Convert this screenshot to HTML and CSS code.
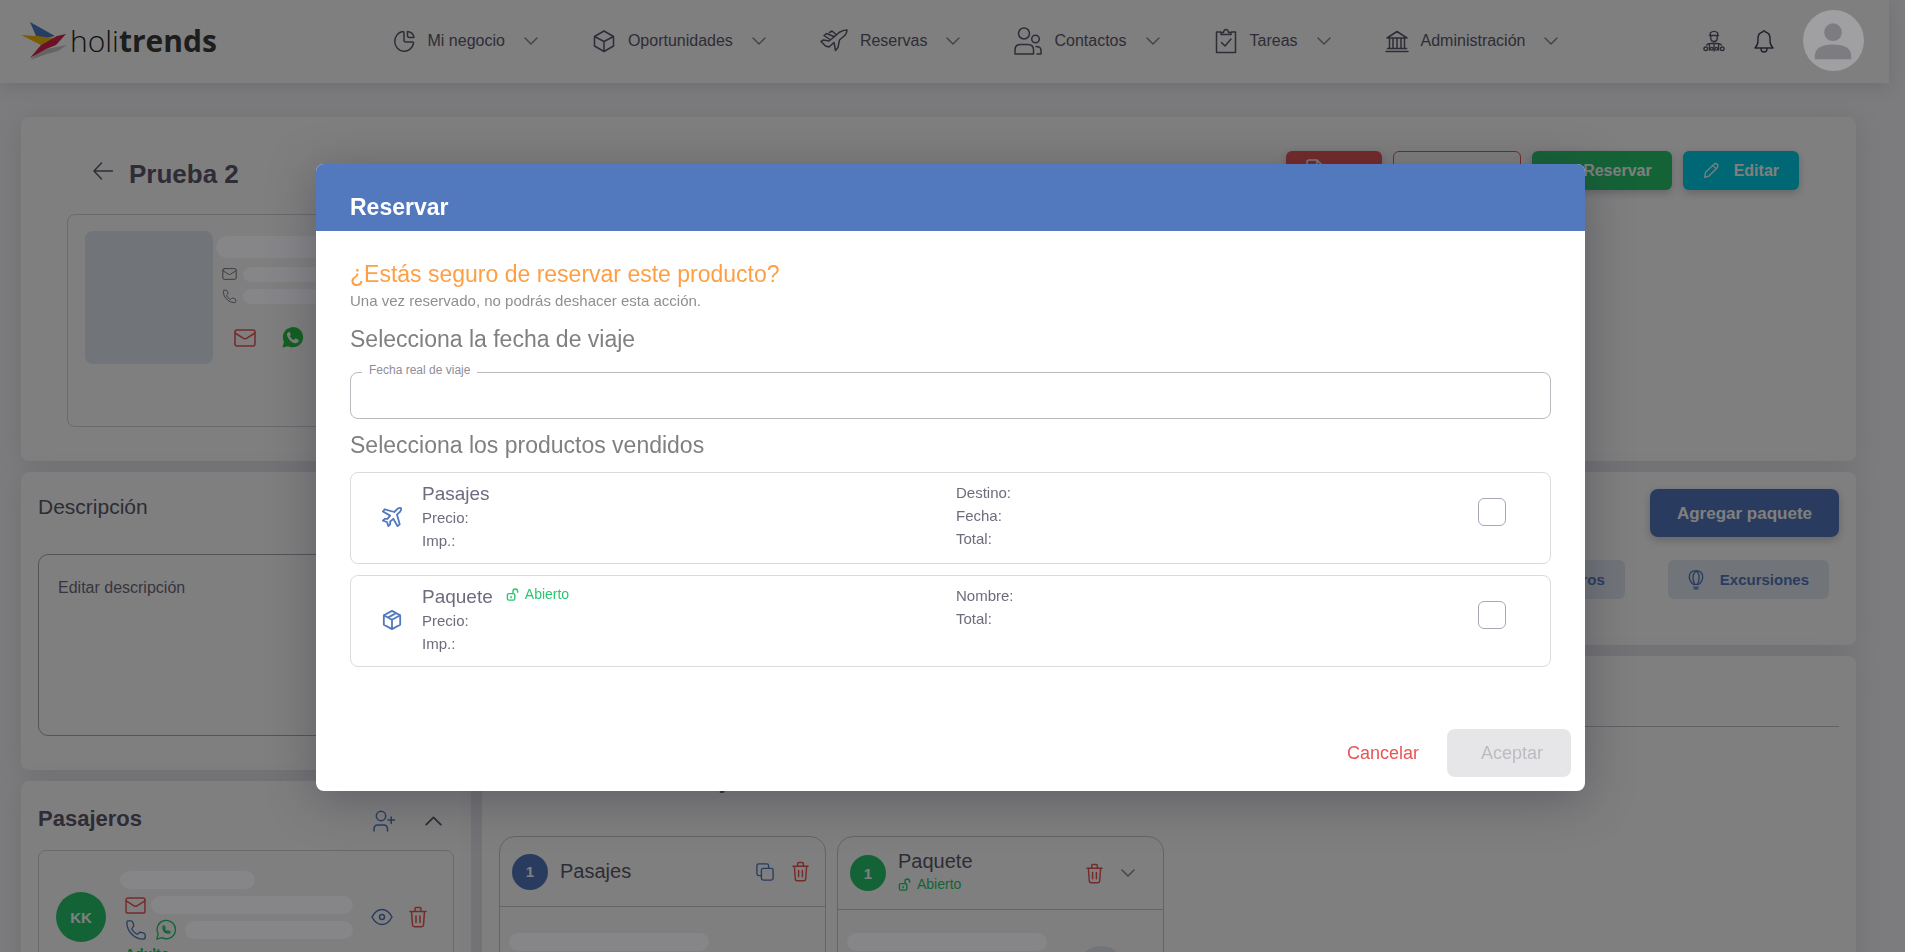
FILE: index.html
```html
<!DOCTYPE html>
<html lang="es">
<head>
<meta charset="utf-8">
<title>Holitrends - Reservar</title>
<link rel="stylesheet" href="styles.css">
</head>
<body>
<svg class="sprite" aria-hidden="true">
  <symbol id="chevron" viewBox="0 0 14 8"><path d="M1 1l6 6 6-6"/></symbol>
  <symbol id="mail" viewBox="0 0 22 18"><rect x="1" y="1" width="20" height="16" rx="2"/><path d="M1 4l8.500 5.300q1.500.9 3 0L21 4"/></symbol>
  <symbol id="phone" viewBox="0 0 24 24"><path d="M3 2h3.500q1.500 0 2 1.500l1 3q.4 1.500-1 2.500-1.500 1-.8 2.500a12 12 0 0 0 4.800 4.800q1.500.7 2.500-.8 1-1.400 2.500-1l3 1q1.500.5 1.500 2V20q0 2-2 2A18.500 18.500 0 0 1 2 4q0-2 1-2"/></symbol>
  <symbol id="whatsapp" viewBox="0 0 24 24"><path d="M2 22l1.500-5.700a10 10 0 1 1 4 4z"/><path d="M8.700 8.500v1.300a6 6 0 0 0 5.500 5.500h1.300a.8.8 0 0 0 0-1.800l-1.300-.6-1.300 1a6 6 0 0 1-2.800-2.800l1-1.300-.6-1.300a.9.9 0 0 0-1.800 0"/></symbol>
  <symbol id="trash" viewBox="0 0 18 22"><path d="M1 5.500h16M6 5V2.500Q6 1.500 7 1.500h4q1 0 1 1V5M2.500 5.500l1 13.500q.2 1.800 2 1.800h7q1.800 0 2-1.800l1-13.500M7 10v6.500M11 10v6.500"/></symbol>
  <symbol id="lock" viewBox="0 0 13 14"><rect x="1" y="6" width="8" height="7" rx="1.500"/><path d="M7 6V3.500a2.500 2.500 0 0 1 5 0V4.500M5 9v1.500"/></symbol>
</svg>

<div class="page">
  <header class="topbar">
    <a class="logo" href="#" aria-label="holitrends">
      <svg width="46" height="38" viewBox="0 0 46 38">
        <path fill="#c8c9cd" d="M9 38L20 28 46 23 37 29 26 32z"/>
        <path fill="#4a7cc4" d="M9 0L34 14 26 16 15 14z"/>
        <path fill="#f2b90c" d="M0 13L15 14 33 16 20 23 12 19z"/>
        <path fill="#d8224c" d="M45 12L36 14 20 23 9 36 25 27 35 23z"/>
      </svg>
      <span class="logo-text">holi<b>trends</b></span>
    </a>
    <nav class="nav">
      <button class="nav-item"><svg class="line" width="24" height="24" viewBox="0 0 24 24"><path d="M10.500 2.500A9.500 10 0 1 0 21.500 14.500q.4-1.500-1-1.500H14q-2 0-2-2V3.500q0-1-1.500-1M15.500 2.500v4q0 2 2 2h4.500A7.500 7 0 0 0 15.500 2.500"/></svg><span>Mi negocio</span><svg class="chev" width="14" height="8"><use href="#chevron"/></svg></button>
      <button class="nav-item"><svg class="line" width="24" height="24" viewBox="0 0 24 24"><path d="M12 2l9.500 5.500v9.500L12 22.500 2.500 17V7.500zM12 12.500l9.500-5M12 12.500v10M12 12.500l-9.500-5"/></svg><span>Oportunidades</span><svg class="chev" width="14" height="8"><use href="#chevron"/></svg></button>
      <button class="nav-item"><svg class="line" width="28" height="24" viewBox="0 0 28 24"><path d="M1 12.500L3.500 11l5.500 1q6-4.500 10-8.500 4-2.500 8-2.500 0 4-4 7l-3.500 3-1.500 7.500-2.500 3-1.500-8L9 18l-3.500-1zM4 6.500L6.500 4.500 14 7.500M4 6.500l6 4M9.500 3.500L12 2l3.500 3"/></svg><span>Reservas</span><svg class="chev" width="14" height="8"><use href="#chevron"/></svg></button>
      <button class="nav-item"><svg class="line" width="28" height="28" viewBox="0 0 28 28"><circle cx="10" cy="6.500" r="5.500"/><circle cx="21.500" cy="12" r="3.800"/><path d="M1 27v-4q0-5.500 5.500-5.500h7.500q5.500 0 5.500 5.500v4zM22 19.500q5 0 5 4V27h-4"/></svg><span>Contactos</span><svg class="chev" width="14" height="8"><use href="#chevron"/></svg></button>
      <button class="nav-item"><svg class="line" width="24" height="26" viewBox="0 0 24 26"><path d="M7 4H2.500v20.500h19V4H17M7 6.500V4.500h2.500Q10 1.500 12 1.500t2.500 3H17v2zM7.500 14.500l3.500 3.500 6-7"/></svg><span>Tareas</span><svg class="chev" width="14" height="8"><use href="#chevron"/></svg></button>
      <button class="nav-item"><svg class="line" width="24" height="24" viewBox="0 0 24 24"><path d="M1 22.500h22M2.500 19.500h19M2 9l10-6.500L22 9zM4.500 9v10.500M8 9v10.500M12 9v10.500M16 9v10.500M19.500 9v10.500"/></svg><span>Administración</span><svg class="chev" width="14" height="8"><use href="#chevron"/></svg></button>
    </nav>
    <div class="tools">
      <button class="icon-btn" aria-label="Equipo"><svg class="line" width="22" height="22" viewBox="0 0 24 24"><path d="M7 6h10M8 6V3Q12 0 16 3V6M8.500 6v3a3.500 3.500 0 0 0 7 0V6M12 14v9M4 16.500q1-2 8-2t8 2M7 16v6M17 16v6"/><circle cx="3" cy="20.500" r="2"/><circle cx="9.500" cy="20.500" r="1.500"/><circle cx="14.500" cy="20.500" r="1.500"/><circle cx="21" cy="20.500" r="2"/></svg></button>
      <button class="icon-btn bell" aria-label="Notificaciones"><svg class="line" width="20" height="24" viewBox="0 0 20 24"><path d="M1 19h18q-3-3-3-7V9.500Q16 4 11.500 3 10 .5 8.500 3 4 4 4 9.500V12q0 4-3 7M7 19.500q0 3.500 3 3.500t3-3.500"/></svg></button>
      <svg class="avatar" width="61" height="61" viewBox="0 0 62 62"><circle cx="31" cy="31" r="31" fill="#a0a0a3"/><circle cx="30.500" cy="22.500" r="9" fill="#7d7c81"/><path fill="#7d7c81" d="M12 50v-3q0-12 18.500-12T49 47v3z"/></svg>
    </div>
  </header>

  <main class="content">
    <section class="card summary">
      <div class="summary-head">
        <button class="icon-btn back" aria-label="Volver"><svg class="line" width="20" height="18" viewBox="0 0 20 18"><path d="M19.500 9H1M8.500 1L1 9l7.500 8"/></svg></button>
        <h1>Prueba 2</h1>
        <div class="actions">
          <button class="btn danger" aria-label="Exportar"><svg class="line" width="18" height="24" viewBox="0 0 18 24"><path d="M3 22q-2 0-2-2V4q0-2 2-2h8l5 5v13q0 2-2 2zM11 2v5h5"/></svg></button>
          <button class="btn danger-outline" aria-label="Anular"></button>
          <button class="btn success"><svg class="line" width="20" height="20" viewBox="0 0 20 20"><path d="M3 10l5 5 9-10"/></svg>Reservar</button>
          <button class="btn info"><svg class="line" width="17" height="17" viewBox="0 0 20 20"><path d="M2 18l1-6L13 2.500q1.500-1.500 3.500 0t.5 4L7 16.500zM11.500 4l4 4"/></svg>Editar</button>
        </div>
      </div>
      <div class="contact">
        <div class="photo"></div>
        <div class="contact-data">
          <span class="pill pill-name"></span>
          <div class="contact-row"><svg class="line" width="15" height="12"><use href="#mail"/></svg><span class="pill pill-thin"></span></div>
          <div class="contact-row"><svg class="line" width="15" height="15"><use href="#phone"/></svg><span class="pill pill-thin"></span></div>
          <div class="contact-links">
            <a href="#" class="red" aria-label="Correo"><svg class="line" width="22" height="18"><use href="#mail"/></svg></a>
            <a href="#" aria-label="WhatsApp"><svg width="23" height="23" viewBox="0 0 24 24"><path fill="#25c045" d="M1.500 22.500l1.600-6A10.600 10.600 0 1 1 7.500 21z"/><path fill="#fff" d="M8 6.200q-2 1-1.800 3.300.5 3.500 4 6.500t6.800 1.500q2-1 1.500-3l-3.300-1.600-1.600 1.800q-3-1-4.500-4.200l1.200-1.300L9 6.200z"/></svg></a>
          </div>
        </div>
      </div>
    </section>

    <div class="columns">
      <div class="col">
        <section class="card description">
          <h2><label for="descripcion">Descripción</label></h2>
          <textarea id="descripcion" placeholder="Editar descripción"></textarea>
        </section>
        <section class="card passengers">
          <div class="passengers-head">
            <h2>Pasajeros</h2>
            <button class="icon-btn blue" aria-label="Agregar pasajero"><svg class="line" width="22" height="22" viewBox="0 0 22 22"><circle cx="8" cy="6" r="4.700"/><path d="M1 21v-2q0-4 4-4h5.500q4 0 4 4v2M15 10h6.500M18.200 7v6.500"/></svg></button>
            <button class="icon-btn" aria-label="Contraer"><svg class="line flip" width="17" height="10"><use href="#chevron"/></svg></button>
          </div>
          <div class="passenger">
            <span class="badge big">KK</span>
            <div class="passenger-data">
              <span class="pill pill-who"></span>
              <div class="passenger-row"><svg class="line red" width="21" height="17"><use href="#mail"/></svg><span class="pill"></span></div>
              <div class="passenger-row second"><svg class="line blue" width="22" height="22"><use href="#phone"/></svg><svg class="line green" width="22" height="22"><use href="#whatsapp"/></svg><span class="pill"></span></div>
              <b class="kind">Adulto</b>
            </div>
            <button class="icon-btn blue" aria-label="Ver"><svg class="line" width="22" height="18" viewBox="0 0 22 18"><path d="M1 9q4-7.500 10-7.500T21 9q-4 7.500-10 7.500T1 9"/><circle cx="11" cy="9" r="2.500"/></svg></button>
            <button class="icon-btn red" aria-label="Eliminar"><svg class="line" width="18" height="22"><use href="#trash"/></svg></button>
          </div>
        </section>
      </div>

      <div class="col">
        <section class="card add">
          <button class="btn primary">Agregar paquete</button>
          <div class="add-kinds">
            <button class="btn soft">Seguros</button>
            <button class="btn soft"><svg class="line" width="16" height="22" viewBox="0 0 18 24"><path d="M6 17Q1.500 13 1.500 8.500 1.500 1.500 9 1.500t7.500 7Q16.500 13 12 17zM7.500 17Q5.500 12 5.500 8.500T9 1.500q3.500 2.500 3.500 7T10.500 17M6.500 20h5M7 22h4"/></svg>Excursiones</button>
          </div>
        </section>
        <section class="card trip">
          <h2>Información de tu viaje</h2>
          <div class="tiles">
            <article class="tile">
              <header class="tile-head">
                <span class="badge primary-badge">1</span>
                <h3>Pasajes</h3>
                <button class="icon-btn blue" aria-label="Duplicar"><svg class="line" width="18" height="18" viewBox="0 0 20 20"><rect x="6" y="6" width="13" height="13" rx="2"/><path d="M6 14H3q-2 0-2-2V3q0-2 2-2h9q2 0 2 2v3"/></svg></button>
                <button class="icon-btn red" aria-label="Eliminar"><svg class="line" width="17" height="21"><use href="#trash"/></svg></button>
              </header>
              <div class="tile-body"><span class="pill"></span></div>
            </article>
            <article class="tile">
              <header class="tile-head tall">
                <span class="badge">1</span>
                <div class="tile-title"><h3>Paquete</h3><span class="open"><svg class="line" width="13" height="13"><use href="#lock"/></svg>Abierto</span></div>
                <button class="icon-btn red" aria-label="Eliminar"><svg class="line" width="17" height="21"><use href="#trash"/></svg></button>
                <button class="icon-btn" aria-label="Desplegar"><svg class="chev" width="14" height="8"><use href="#chevron"/></svg></button>
              </header>
              <div class="tile-body short"><span class="pill"></span><span class="disc"></span></div>
            </article>
          </div>
        </section>
      </div>
    </div>
  </main>
</div>

<div class="overlay"></div>
<div class="modal-layer">
  <form class="modal" role="dialog" aria-modal="true" aria-labelledby="modal-title">
    <h2 class="modal-title" id="modal-title">Reservar</h2>
    <div class="modal-body">
      <p class="question">¿Estás seguro de reservar este producto?</p>
      <p class="note">Una vez reservado, no podrás deshacer esta acción.</p>
      <h3>Selecciona la fecha de viaje</h3>
      <div class="field">
        <label for="fecha">Fecha real de viaje</label>
        <input id="fecha" type="text">
      </div>
      <h3>Selecciona los productos vendidos</h3>
      <div class="products">
        <div class="product">
          <svg class="line bold blue" width="20" height="20" viewBox="0 0 22 22"><path d="M13.500 5.500L17 2q2.500-1.500 3.800-.8Q21.500 2.500 20 5l-3.500 3.500L19.500 19 17 21l-4.500-8L9 16v3l-2 2-1.500-4.500L1 15l2-2h3l3-3.500L1 5l2-2.500z"/></svg>
          <div><h4 id="p1">Pasajes</h4><p>Precio:</p><p>Imp.:</p></div>
          <div><p>Destino:</p><p>Fecha:</p><p>Total:</p></div>
          <input type="checkbox" aria-labelledby="p1">
        </div>
        <div class="product">
          <svg class="line bold blue" width="20" height="20" viewBox="0 0 22 22"><path d="M11 1l9 4.800v10.400L11 21l-9-4.800V5.800zM11 10.800l9-5M11 10.800V21M11 10.800l-9-5M15.500 3.400l-9 5"/></svg>
          <div><div class="product-name"><h4 id="p2">Paquete</h4><span class="open"><svg class="line" width="13" height="13"><use href="#lock"/></svg>Abierto</span></div><p>Precio:</p><p>Imp.:</p></div>
          <div><p>Nombre:</p><p>Total:</p></div>
          <input type="checkbox" aria-labelledby="p2">
        </div>
      </div>
    </div>
    <div class="modal-foot">
      <button type="button" class="cancel">Cancelar</button>
      <button type="submit" class="accept" disabled>Aceptar</button>
    </div>
  </form>
</div>
</body>
</html>
```
FILE: styles.css
```css
* { box-sizing: border-box; }
html, body { height: 100%; }
body { margin: 0; background: #f8f7fa; color: #5d596c; font: 15px/23px "Liberation Sans", Arial, sans-serif; overflow: hidden; }
h1, h2, h3, h4, p { margin: 0; font-weight: 400; }
button { font: inherit; color: inherit; background: none; border: 0; padding: 0; margin: 0; }
a { color: inherit; }
svg { display: block; flex: none; overflow: visible; }
.sprite { position: absolute; width: 0; height: 0; }
.line, .chev { fill: none; stroke: currentColor; stroke-width: 1.500; stroke-linecap: round; stroke-linejoin: round; }
.bold { stroke-width: 2; }
.chev { color: #8d8a99; }
.flip { transform: rotate(180deg); }
.red { color: #ea5455; }
.blue { color: #5278be; }
.green { color: #28c76f; }

.page { height: 100vh; padding-right: 16px; overflow: hidden; }
.topbar { display: flex; align-items: center; height: 83px; padding: 0 25px 2px 21px; background: #fff; box-shadow: 0 4px 16px rgba(75, 70, 92, .15); }
.logo { display: flex; align-items: center; gap: 3px; width: 198px; color: #232323; text-decoration: none; }
.logo-text { font: 300 30px/34px "Open Sans", "Noto Sans", sans-serif; }
.logo-text b { font-weight: 700; color: #3a3a3a; }
.nav { display: flex; flex: 1; justify-content: center; gap: 54px; margin-left: 28px; font-size: 16px; white-space: nowrap; }
.nav-item { display: flex; align-items: center; gap: 12px; }
.nav-item .chev { margin-left: 7px; }
.tools { display: flex; align-items: center; gap: 29px; }
.bell { color: #4b465c; }
.avatar { position: relative; z-index: 5; }

.content { padding: 34px 33px 0 21px; }
.card { background: #fff; border-radius: 8px; box-shadow: 0 4px 28px rgba(75, 70, 92, .14); }
.summary { padding: 34px 57px 34px 46px; }
.summary-head { display: flex; align-items: center; height: 39px; padding-left: 26px; }
.summary-head h1 { align-self: flex-end; margin-left: 16px; font-size: 26px; line-height: 32px; font-weight: 700; color: #5d596c; }
.actions { display: flex; gap: 11px; margin-left: auto; }
.btn { display: flex; align-items: center; justify-content: center; gap: 14px; height: 39px; padding: 0 20px; border-radius: 6px; color: #fff; font-size: 16px; font-weight: 700; box-shadow: 0 3px 8px rgba(75, 70, 92, .3); }
.danger { width: 96px; justify-content: flex-start; align-items: flex-start; padding-top: 7px; background: #ea5455; }
.danger-outline { width: 128px; border: 1px solid #ea5455; box-shadow: none; }
.success { background: #28c76f; gap: 11px; }
.info { background: #00cfe8; }
.primary { height: 48px; padding: 0 27px; border-radius: 8px; background: #5278be; font-size: 17px; }
.soft { background: #e2eaf4; color: #5278be; font-size: 15px; gap: 16px; box-shadow: none; }

.contact { display: flex; gap: 3px; width: 50%; height: 213px; margin-top: 24px; padding: 16px 17px; border: 1px solid #d4d3d9; border-radius: 8px; }
.photo { width: 128px; height: 133px; border-radius: 8px; background: #e2eaf4; }
.contact-data { flex: 1; padding-top: 5px; color: #7a7786; }
.pill { display: block; height: 18px; border-radius: 12px; background: #868689; position: relative; z-index: 5; }
.pill-name { width: 240px; height: 22px; }
.contact-row { display: flex; align-items: center; gap: 6px; height: 22px; padding-left: 6px; }
.pill-name + .contact-row { margin-top: 5px; }
.pill-thin { width: 200px; height: 15px; }
.contact-links { display: flex; align-items: center; gap: 25px; margin: 19px 0 0 18px; }

.columns { display: grid; grid-template-columns: 450px 1fr; gap: 11px; margin-top: 11px; }
.col { display: flex; flex-direction: column; gap: 11px; min-width: 0; }
.description { display: flex; flex-direction: column; padding: 20px 17px 34px; }
.description h2 { font-size: 21px; line-height: 30px; }
.description textarea { height: 182px; margin-top: 32px; padding: 21px 19px; border: 1px solid #a9a7b3; border-radius: 10px; background: none; resize: none; font: 16px/24px "Liberation Sans", Arial, sans-serif; }
.description textarea::placeholder { color: #6f6b7d; }
.passengers { padding: 21px 17px 0; }
.passengers-head { display: flex; align-items: center; gap: 30px; height: 34px; padding-right: 12px; }
.passengers-head h2, .trip h2 { flex: 1; font-size: 22px; line-height: 30px; font-weight: 700; }
.passengers-head .icon-btn { padding-top: 4px; }
.passenger { display: flex; align-items: flex-start; height: 160px; margin-top: 14px; padding: 20px 26px 0 17px; border: 1px solid #d4d3d9; border-radius: 8px; }
.badge { display: grid; place-items: center; flex: none; width: 36px; height: 36px; border-radius: 50%; background: #28c76f; color: #fff; font-weight: 700; }
.primary-badge { background: #5278be; }
.big { width: 50px; height: 50px; margin-top: 21px; }
.passenger-data { flex: 1; margin: 0 18px 0 19px; }
.pill-who { width: 135px; margin-left: -5px; }
.passenger-row { display: flex; align-items: center; gap: 5px; margin-top: 7px; }
.passenger-row .pill { flex: 1; }
.second { gap: 8px; height: 22px; margin-top: 5px; }
.passenger .icon-btn { height: 22px; margin-top: 35px; }
.passenger .icon-btn + .icon-btn { margin-left: 16px; }
.kind { display: block; margin-top: 2px; color: #28c76f; font-size: 14px; }

.add { display: flex; flex-direction: column; align-items: flex-end; gap: 23px; height: 173px; padding: 17px; }
.add-kinds { display: flex; gap: 43px; padding-right: 10px; }
.trip { height: 400px; padding: 70px 17px 0; }
.trip h2 { border-top: 1px solid #c4c2cc; padding-top: 39px; }
.tiles { display: flex; gap: 11px; margin-top: 40px; }
.tile { width: 327px; height: 200px; border: 1px solid #c9c8d0; border-radius: 16px; }
.tile-head { display: flex; align-items: center; gap: 12px; height: 70px; padding: 0 16px 0 12px; border-bottom: 1px solid #c9c8d0; }
.tile-head h3 { flex: 1; font-size: 20px; }
.tile-head .icon-btn + .icon-btn { margin-left: 6px; }
.tall { height: 73px; padding-right: 28px; }
.tile-title { flex: 1; }
.open { display: flex; align-items: center; gap: 6px; color: #28c76f; font-size: 14px; }
.tile-body { display: flex; gap: 30px; padding: 26px 9px; }
.tile-body .pill { width: 200px; }
.short { padding-top: 23px; }
.disc { width: 48px; height: 48px; margin-top: 13px; border-radius: 50%; background: #e2eaf4; }

.overlay { position: fixed; inset: 0; z-index: 2; background: rgba(0, 0, 0, .5); }
.modal-layer { position: fixed; inset: 0; z-index: 10; display: flex; align-items: center; justify-content: center; padding: 3px 4px 0 0; }
.modal { width: 1269px; max-width: 96%; border-radius: 8px; overflow: hidden; background: #fff; color: #6f6b7d; box-shadow: 0 8px 48px rgba(47, 43, 61, .4); }
.modal-title { padding: 30px 34px 10px; background: #5278be; color: #fff; font-size: 23px; line-height: 27px; font-weight: 700; }
.modal-body { padding: 29px 34px 0; }
.question { color: #ff9f43; font-size: 23px; line-height: 28px; }
.note { margin-top: 2px; line-height: 22px; color: #8f8f8f; }
.modal-body h3 { margin: 12px 0 13px; color: #808080; font-size: 23px; line-height: 28px; }
.modal-body .note + h3 { margin-top: 13px; }
.field { position: relative; margin-top: 19px; }
.field label { position: absolute; top: -9px; left: 12px; padding: 0 7px; background: #fff; color: #8f8c9a; font-size: 12px; line-height: 14px; }
.field input { display: block; width: 100%; height: 47px; padding: 0 16px; border: 1px solid #bab9c0; border-radius: 8px; background: none; font: inherit; }
.products { display: grid; gap: 11px; }
.product { display: grid; grid-template-columns: 20px 514px 1fr 28px; gap: 0 20px; align-items: start; height: 92px; padding: 8px 44px 0 31px; border: 1px solid #dbdade; border-radius: 8px; }
.product > svg { margin-top: 26px; }
.product h4 { font-size: 19px; line-height: 25px; }
.product-name { display: flex; gap: 13px; }
.product-name .open { line-height: 20px; height: 20px; }
.product input { appearance: none; width: 28px; height: 28px; margin: 17px 0 0; border: 1px solid #a9a7b3; border-radius: 6px; background: #fff; }
.modal-foot { display: flex; justify-content: flex-end; gap: 28px; padding: 62px 14px 14px; font-size: 18px; }
.cancel { color: #ea5455; }
.accept { height: 48px; padding: 0 28px 0 34px; border-radius: 8px; background: #e6e6e9; color: #bcbbc1; }
```
